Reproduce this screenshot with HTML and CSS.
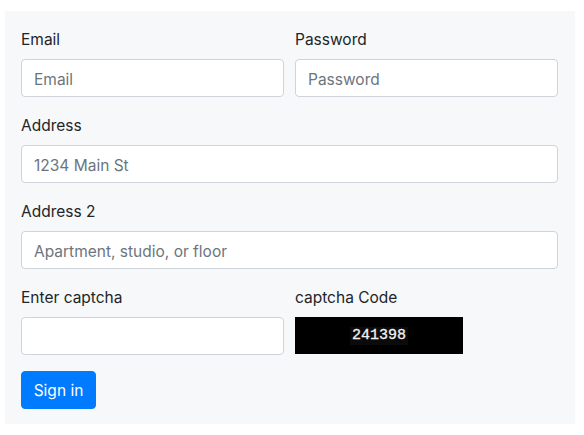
FILE: index.html
```html
<!DOCTYPE html>
<html lang="en">
<head>
<meta charset="utf-8">
<title>Sign in</title>
<link rel="stylesheet" href="styles.css">
</head>
<body>
<form class="panel">
  <div class="row">
    <div class="group">
      <label class="label" for="email">Email</label>
      <input class="control" id="email" type="email" placeholder="Email">
    </div>
    <div class="group">
      <label class="label" for="password">Password</label>
      <input class="control" id="password" type="password" placeholder="Password">
    </div>
  </div>
  <div class="group">
    <label class="label" for="address">Address</label>
    <input class="control" id="address" type="text" placeholder="1234 Main St">
  </div>
  <div class="group">
    <label class="label" for="address2">Address 2</label>
    <input class="control" id="address2" type="text" placeholder="Apartment, studio, or floor">
  </div>
  <div class="row">
    <div class="group">
      <label class="label" for="captcha">Enter captcha</label>
      <input class="control" id="captcha" type="text">
    </div>
    <div class="group">
      <span class="label">captcha Code</span>
      <div class="captcha"><span class="captcha-text">241398</span></div>
    </div>
  </div>
  <button class="btn" type="button">Sign in</button>
</form>
</body>
</html>
```
FILE: styles.css
```css
* { box-sizing: border-box; }
html, body { margin: 0; padding: 0; background: #fff; }
body {
  padding: 11px 9px 11px 5px;
  font-family: Inter, "Liberation Sans", Arial, sans-serif;
  font-size: 15.5px;
  line-height: 1.5;
  color: #212529;
}
.panel {
  background: #f7f8fa;
  padding: 16px 17px 15px 16px;
  display: flex;
  flex-direction: column;
}
.row {
  display: grid;
  grid-template-columns: 1fr 1fr;
  column-gap: 11px;
}
.group {
  display: flex;
  flex-direction: column;
  margin-bottom: 16px;
}
.label {
  display: block;
  margin-bottom: 8px;
  height: 24px;
  padding-top: 1px;
}
.control {
  display: block;
  width: 100%;
  height: 38px;
  padding: 7px 12px 5px;
  font-family: inherit;
  font-size: 15.5px;
  line-height: 1.5;
  color: #495057;
  background: #fff;
  border: 1px solid #ced4da;
  border-radius: 4px;
  outline: none;
}
.control::placeholder { color: #6c757d; opacity: 1; }
.captcha {
  width: 168px;
  height: 37px;
  background: #000;
  display: flex;
  align-items: center;
  justify-content: center;
}
.captcha-text {
  font-family: "Liberation Mono", "Courier New", monospace;
  font-size: 15px;
  font-weight: normal;
  color: #f2f2f2;
  -webkit-text-stroke: 0.3px #f2f2f2;
  background: #0b0b0b;
  padding: 0 2px;
  line-height: 18px;
}
.btn {
  align-self: flex-start;
  width: 75px;
  height: 38px;
  padding: 6px 0 5px;
  white-space: nowrap;
  text-align: center;
  font-family: inherit;
  font-size: 15.5px;
  line-height: 1.5;
  color: #fff;
  background: #007bff;
  border: 1px solid #007bff;
  border-radius: 4px;
}
```
